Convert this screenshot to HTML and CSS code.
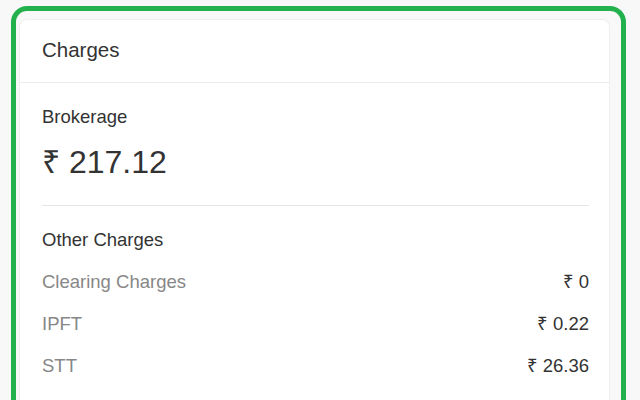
FILE: index.html
```html
<!DOCTYPE html>
<html lang="en">
<head>
    <meta charset="UTF-8">
    <meta name="viewport" content="width=device-width, initial-scale=1.0">
    <title>Charges</title>
    <link rel="stylesheet" href="styles.css">
</head>
<body>
    <div class="frame">
        <div class="card">
            <div class="card-header">Charges</div>
            <div class="card-body">
                <div class="label">Brokerage</div>
                <div class="amount">₹ 217.12</div>
                <hr class="divider">
                <div class="label">Other Charges</div>
                <div class="charges">
                    <div class="row">
                        <span class="row-name">Clearing Charges</span>
                        <span class="row-value">₹ 0</span>
                    </div>
                    <div class="row">
                        <span class="row-name">IPFT</span>
                        <span class="row-value">₹ 0.22</span>
                    </div>
                    <div class="row">
                        <span class="row-name">STT</span>
                        <span class="row-value">₹ 26.36</span>
                    </div>
                </div>
            </div>
        </div>
    </div>
</body>
</html>
```

FILE: styles.css
```css
body {
    margin: 0;
    background-color: #f8f8f8;
    font-family: "Liberation Sans", Arial, sans-serif;
    color: #333;
    overflow: hidden;
}
.frame {
    margin: 6px 14px 0 11px;
    border: 5px solid #22b14c;
    border-bottom: none;
    border-radius: 16px 16px 0 0;
    padding: 8px 11px 0 3px;
    height: 381px;
}
.card {
    height: 100%;
    box-sizing: border-box;
    background-color: #fff;
    border: 1px solid #efeff2;
    border-bottom: none;
    border-radius: 8px 8px 0 0;
}
.card-header {
    font-size: 20.5px;
    line-height: 22px;
    padding: 19px 22px 21px;
    border-bottom: 1px solid #eaeaf0;
}
.card-body {
    padding: 22px 20px 0 22px;
}
.label {
    font-size: 18.5px;
    line-height: 24px;
}
.amount {
    font-size: 32px;
    line-height: 40px;
    margin-top: 13px;
}
.divider {
    border: none;
    border-top: 1px solid #e6e6e6;
    margin: 23px 0 22px;
}
.charges {
    margin-top: 9px;
}
.row {
    display: flex;
    justify-content: space-between;
    font-size: 18.5px;
    line-height: 42px;
}
.row-name {
    color: #878787;
}
.row-value {
    color: #333;
}
```
